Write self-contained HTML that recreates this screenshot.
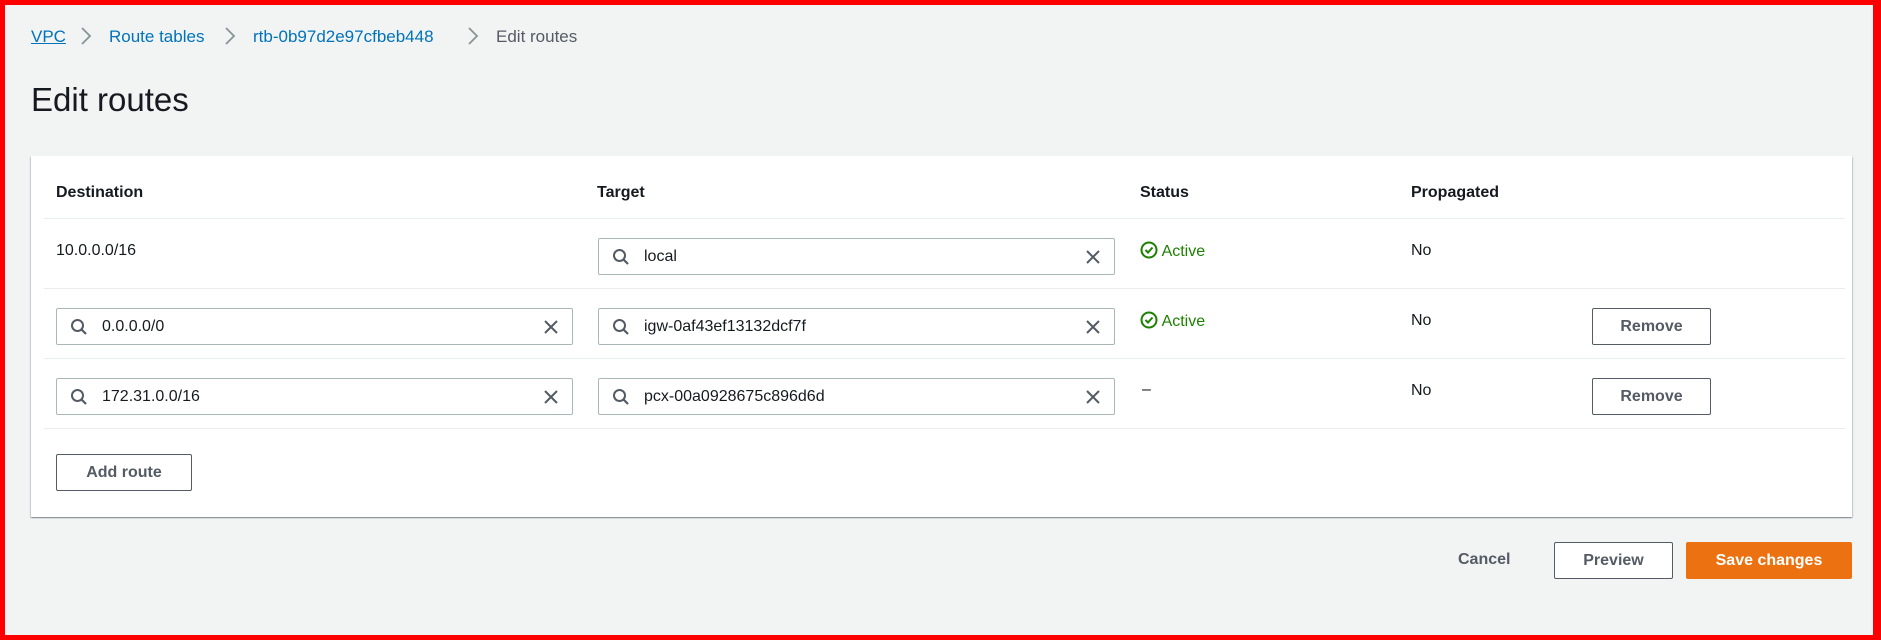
<!DOCTYPE html>
<html><head><style>
*{box-sizing:border-box;margin:0;padding:0}
html,body{width:1881px;height:640px;overflow:hidden}
body{background:#f00;font-family:"Liberation Sans",sans-serif;color:#16191f;font-size:16px;position:relative}
.page{position:absolute;left:5px;top:5px;width:1868px;height:630px;background:#f2f3f3}
.abs{position:absolute;white-space:nowrap}
.bc{top:22px;font-size:17px;color:#0073bb}
.chev{position:absolute;top:22px}
h1{position:absolute;left:26px;top:76px;font-size:33px;font-weight:400;color:#16191f}
.panel{position:absolute;left:26px;top:151px;width:1821px;height:361px;background:#fff;box-shadow:0 1px 1px rgba(0,28,36,.3),1px 1px 1px rgba(0,28,36,.15),-1px 1px 1px rgba(0,28,36,.15)}
.hr{position:absolute;left:13px;width:1801px;height:1px;background:#eaeded}
.th{font-weight:700;font-size:16px;top:28px}
.inp{position:absolute;height:37px;border:1px solid #aab7b8;border-radius:2px;background:#fff}
.inp .t{position:absolute;left:45px;top:9px;font-size:16px}
.inp svg.s{position:absolute;left:13px;top:9px}
.inp svg.x{position:absolute;right:13px;top:10px}
.btn{position:absolute;height:37px;border:1px solid #545b64;border-radius:2px;background:#fff;font-weight:700;color:#545b64;font-size:16px;text-align:center;line-height:35px}
.act{color:#1d8102;font-size:16px}
</style></head><body><div class="page">
<div class="abs bc" style="left:26px;text-decoration:underline">VPC</div>
<svg class="chev" style="left:75px" width="12" height="18" viewBox="0 0 12 18"><path d="M2 1l8 8-8 8" fill="none" stroke="#879596" stroke-width="1.8"/></svg>
<div class="abs bc" style="left:104px">Route tables</div>
<svg class="chev" style="left:219px" width="12" height="18" viewBox="0 0 12 18"><path d="M2 1l8 8-8 8" fill="none" stroke="#879596" stroke-width="1.8"/></svg>
<div class="abs bc" style="left:248px">rtb-0b97d2e97cfbeb448</div>
<svg class="chev" style="left:462px" width="12" height="18" viewBox="0 0 12 18"><path d="M2 1l8 8-8 8" fill="none" stroke="#879596" stroke-width="1.8"/></svg>
<div class="abs bc" style="left:491px;color:#545b64">Edit routes</div>
<h1>Edit routes</h1>
<div class="panel">
<div class="abs th" style="left:25px">Destination</div>
<div class="abs th" style="left:566px">Target</div>
<div class="abs th" style="left:1109px">Status</div>
<div class="abs th" style="left:1380px">Propagated</div>
<div class="hr" style="top:62px"></div>
<div class="hr" style="top:132px"></div>
<div class="hr" style="top:202px"></div>
<div class="hr" style="top:272px"></div>

<div class="abs" style="left:25px;top:86px">10.0.0.0/16</div>
<div class="inp" style="left:567px;top:82px;width:517px"><svg class="s" width="18" height="18" viewBox="0 0 18 18"><circle cx="7.5" cy="7.5" r="5.5" fill="none" stroke="#545b64" stroke-width="2"/><path d="M11.5 11.5L16 16" stroke="#545b64" stroke-width="2.2"/></svg><span class="t">local</span><svg class="x" width="16" height="16" viewBox="0 0 16 16"><path d="M2 2L14 14M14 2L2 14" stroke="#545b64" stroke-width="2"/></svg></div>
<div class="abs act" style="left:1109px;top:85px"><svg width="18" height="18" viewBox="0 0 18 18" style="vertical-align:-3px"><circle cx="9" cy="9" r="7.5" fill="none" stroke="#1d8102" stroke-width="2"/><path d="M5.5 9l2.5 2.5 4.5-5" fill="none" stroke="#1d8102" stroke-width="2"/></svg> Active</div>
<div class="abs" style="left:1380px;top:86px">No</div>

<div class="inp" style="left:25px;top:152px;width:517px"><svg class="s" width="18" height="18" viewBox="0 0 18 18"><circle cx="7.5" cy="7.5" r="5.5" fill="none" stroke="#545b64" stroke-width="2"/><path d="M11.5 11.5L16 16" stroke="#545b64" stroke-width="2.2"/></svg><span class="t">0.0.0.0/0</span><svg class="x" width="16" height="16" viewBox="0 0 16 16"><path d="M2 2L14 14M14 2L2 14" stroke="#545b64" stroke-width="2"/></svg></div>
<div class="inp" style="left:567px;top:152px;width:517px"><svg class="s" width="18" height="18" viewBox="0 0 18 18"><circle cx="7.5" cy="7.5" r="5.5" fill="none" stroke="#545b64" stroke-width="2"/><path d="M11.5 11.5L16 16" stroke="#545b64" stroke-width="2.2"/></svg><span class="t">igw-0af43ef13132dcf7f</span><svg class="x" width="16" height="16" viewBox="0 0 16 16"><path d="M2 2L14 14M14 2L2 14" stroke="#545b64" stroke-width="2"/></svg></div>
<div class="abs act" style="left:1109px;top:155px"><svg width="18" height="18" viewBox="0 0 18 18" style="vertical-align:-3px"><circle cx="9" cy="9" r="7.5" fill="none" stroke="#1d8102" stroke-width="2"/><path d="M5.5 9l2.5 2.5 4.5-5" fill="none" stroke="#1d8102" stroke-width="2"/></svg> Active</div>
<div class="abs" style="left:1380px;top:156px">No</div>
<div class="btn" style="left:1561px;top:152px;width:119px">Remove</div>

<div class="inp" style="left:25px;top:222px;width:517px"><svg class="s" width="18" height="18" viewBox="0 0 18 18"><circle cx="7.5" cy="7.5" r="5.5" fill="none" stroke="#545b64" stroke-width="2"/><path d="M11.5 11.5L16 16" stroke="#545b64" stroke-width="2.2"/></svg><span class="t">172.31.0.0/16</span><svg class="x" width="16" height="16" viewBox="0 0 16 16"><path d="M2 2L14 14M14 2L2 14" stroke="#545b64" stroke-width="2"/></svg></div>
<div class="inp" style="left:567px;top:222px;width:517px"><svg class="s" width="18" height="18" viewBox="0 0 18 18"><circle cx="7.5" cy="7.5" r="5.5" fill="none" stroke="#545b64" stroke-width="2"/><path d="M11.5 11.5L16 16" stroke="#545b64" stroke-width="2.2"/></svg><span class="t">pcx-00a0928675c896d6d</span><svg class="x" width="16" height="16" viewBox="0 0 16 16"><path d="M2 2L14 14M14 2L2 14" stroke="#545b64" stroke-width="2"/></svg></div>
<div class="abs" style="left:1111px;top:225px">–</div>
<div class="abs" style="left:1380px;top:226px">No</div>
<div class="btn" style="left:1561px;top:222px;width:119px">Remove</div>

<div class="btn" style="left:25px;top:298px;width:136px">Add route</div>
</div>
<div class="abs" style="left:1453px;top:546px;font-weight:700;color:#545b64">Cancel</div>
<div class="btn" style="left:1549px;top:537px;width:119px">Preview</div>
<div class="btn" style="left:1681px;top:537px;width:166px;background:#ec7211;border-color:#ec7211;color:#fff">Save changes</div>
</div></body></html>
